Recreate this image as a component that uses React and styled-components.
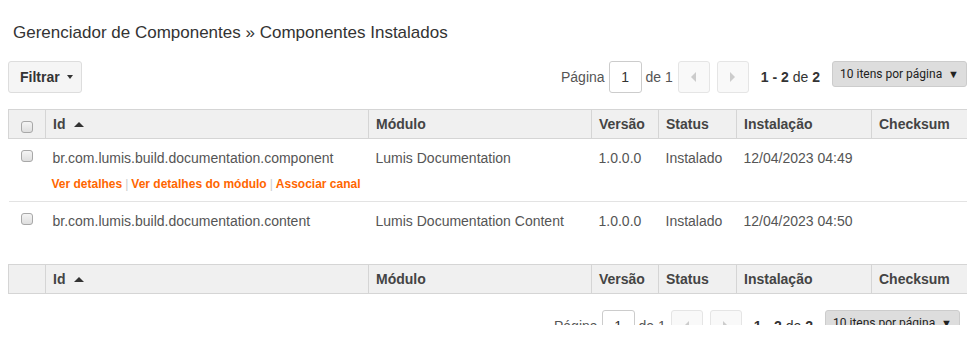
import styled, { createGlobalStyle } from "styled-components";

const GlobalStyle = createGlobalStyle`
  body {
    margin: 8px;
    font-family: "Liberation Sans", Arial, sans-serif;
    background: #fff;
    color: #333;
  }
`;

const columns = [
  { key: "check", label: "", width: 37 },
  { key: "id", label: "Id", width: 323, sorted: true },
  { key: "module", label: "Módulo", width: 223 },
  { key: "version", label: "Versão", width: 67 },
  { key: "status", label: "Status", width: 78 },
  { key: "installed", label: "Instalação", width: 135 },
  { key: "checksum", label: "Checksum", width: 96 },
];

const rows = [
  {
    id: "br.com.lumis.build.documentation.component",
    module: "Lumis Documentation",
    version: "1.0.0.0",
    status: "Instalado",
    installed: "12/04/2023 04:49",
    links: ["Ver detalhes", "Ver detalhes do módulo", "Associar canal"],
  },
  {
    id: "br.com.lumis.build.documentation.content",
    module: "Lumis Documentation Content",
    version: "1.0.0.0",
    status: "Instalado",
    installed: "12/04/2023 04:50",
    links: [],
  },
];

const Page = () => {
  return (
    <Viewport>
      <GlobalStyle />
      <Title>Gerenciador de Componentes » Componentes Instalados</Title>
      <Toolbar>
        <FilterButton>
          Filtrar <Caret />
        </FilterButton>
        <Pager />
      </Toolbar>
      <Table>
        <colgroup>
          {columns.map((c) => (
            <col key={c.key} style={{ width: c.width }} />
          ))}
        </colgroup>
        <thead>
          <HeaderRow withCheck />
        </thead>
        <tbody>
          {rows.map((r) => (
            <Row key={r.id}>
              <Cell>
                <CheckBox />
              </Cell>
              <Cell>
                {r.id}
                <Links>
                  {r.links.map((l, i) => (
                    <span key={l}>
                      {i > 0 && <Sep>|</Sep>}
                      <Link href="#">{l}</Link>
                    </span>
                  ))}
                </Links>
              </Cell>
              <Cell>{r.module}</Cell>
              <Cell>{r.version}</Cell>
              <Cell>{r.status}</Cell>
              <Cell>{r.installed}</Cell>
              <Cell />
            </Row>
          ))}
        </tbody>
        <tfoot>
          <HeaderRow />
        </tfoot>
      </Table>
      <Toolbar bottom>
        <span />
        <Pager />
      </Toolbar>
    </Viewport>
  );
};

const HeaderRow = ({ withCheck }) => (
  <tr>
    {columns.map((c) => (
      <Th key={c.key}>
        {c.key === "check" ? (
          withCheck && <CheckBox head />
        ) : (
          <>
            {c.label}
            {c.sorted && <SortArrow />}
          </>
        )}
      </Th>
    ))}
  </tr>
);

const Pager = () => (
  <PagerWrap>
    <PagerText>Página</PagerText>
    <PageInput defaultValue="1" />
    <PagerText>de 1</PagerText>
    <NavGroup>
      <NavButton>
        <NavArrow dir="left" />
      </NavButton>
      <NavButton>
        <NavArrow dir="right" />
      </NavButton>
    </NavGroup>
    <Count>
      <b>1 - 2</b> de <b>2</b>
    </Count>
    <PerPage>
      10 itens por página <span>▼</span>
    </PerPage>
  </PagerWrap>
);

const Viewport = styled.div`
  height: 317px;
  overflow: hidden;
`;

const Title = styled.h1`
  margin: 0;
  padding: 15px 5px 0;
  font-size: 17px;
  line-height: 20px;
  font-weight: normal;
  color: #333;
`;

const Toolbar = styled.div`
  display: flex;
  justify-content: space-between;
  align-items: flex-start;
  margin-top: ${({ bottom }) => (bottom ? "16px" : "18px")};
  padding-right: ${({ bottom }) => (bottom ? "7px" : "0")};
`;

const FilterButton = styled.button`
  display: flex;
  align-items: center;
  gap: 7px;
  height: 32px;
  width: 74px;
  padding: 0 0 0 11px;
  border: 1px solid #ddd;
  border-radius: 3px;
  background: #f5f5f5;
  font-family: inherit;
  font-size: 14px;
  font-weight: bold;
  color: #333;
`;

const Caret = styled.i`
  width: 0;
  height: 0;
  border-left: 3px solid transparent;
  border-right: 3px solid transparent;
  border-top: 4px solid #333;
`;

const PagerWrap = styled.div`
  display: flex;
  align-items: flex-start;
`;

const PagerText = styled.span`
  font-size: 14px;
  line-height: 32px;
  color: #555;
  margin: 0 4px;
`;

const PageInput = styled.input`
  box-sizing: border-box;
  width: 33px;
  height: 32px;
  padding: 0;
  border: 1px solid #ccc;
  border-radius: 3px;
  text-align: center;
  font-family: inherit;
  font-size: 14px;
  color: #333;
`;

const NavGroup = styled.div`
  display: flex;
  gap: 7px;
  margin-left: 1px;
`;

const NavButton = styled.button`
  box-sizing: border-box;
  width: 32px;
  height: 32px;
  border: 1px solid #e5e5e5;
  border-radius: 3px;
  background: #f9f9f9;
  display: flex;
  align-items: center;
  justify-content: center;
  padding: 0;
`;

const NavArrow = styled.i`
  width: 0;
  height: 0;
  border-top: 5px solid transparent;
  border-bottom: 5px solid transparent;
  ${({ dir }) =>
    dir === "left"
      ? "border-right: 5px solid #ccc;"
      : "border-left: 5px solid #ccc;"}
`;

const Count = styled.span`
  font-size: 14px;
  line-height: 32px;
  color: #333;
  margin: 0 12px;

  b {
    color: #333;
  }
`;

const PerPage = styled.div`
  box-sizing: border-box;
  width: 135px;
  height: 26px;
  padding: 0 7px 0 7px;
  display: flex;
  align-items: center;
  justify-content: space-between;
  background: #ddd;
  border: 1px solid #ccc;
  border-radius: 3px;
  font-family: "Roboto", "Liberation Sans", sans-serif;
  font-size: 12px;
  color: #222;

  span {
    font-size: 11px;
  }
`;

const Table = styled.table`
  width: 100%;
  margin-top: 16px;
  border-collapse: collapse;
  table-layout: fixed;
  font-size: 14px;
`;

const Th = styled.th`
  height: 28px;
  padding: 0 7px;
  text-align: left;
  vertical-align: middle;
  background: #f0f0f0;
  border: 1px solid #d5d5d5;
  color: #444;
  font-weight: bold;
  white-space: nowrap;
`;

const SortArrow = styled.i`
  display: inline-block;
  margin-left: 9px;
  vertical-align: 2px;
  width: 0;
  height: 0;
  border-left: 5px solid transparent;
  border-right: 5px solid transparent;
  border-bottom: 5px solid #333;
`;

const CheckBox = styled.span`
  display: block;
  box-sizing: border-box;
  width: 12px;
  height: 12px;
  margin: ${({ head }) => (head ? "6px 0 0 5px" : "0 0 0 5px")};
  border: 1px solid #a8a8a8;
  border-radius: 3px;
  background: linear-gradient(#f4f4f4, #dedede);
`;

const Row = styled.tr`
  height: 63px;
  border-bottom: 1px solid #e3e3e3;
  vertical-align: top;
`;

const Cell = styled.td`
  padding: 11px 7px 0;
  color: #555;
  line-height: 16px;
  white-space: nowrap;
`;

const Links = styled.div`
  margin-top: 11px;
  margin-left: -1px;
  font-size: 12px;
  font-weight: bold;
  line-height: 14px;
`;

const Link = styled.a`
  color: #f60;
  text-decoration: none;
`;

const Sep = styled.span`
  color: #ccc;
  font-weight: normal;
  margin: 0 3px;
`;

export default Page;
